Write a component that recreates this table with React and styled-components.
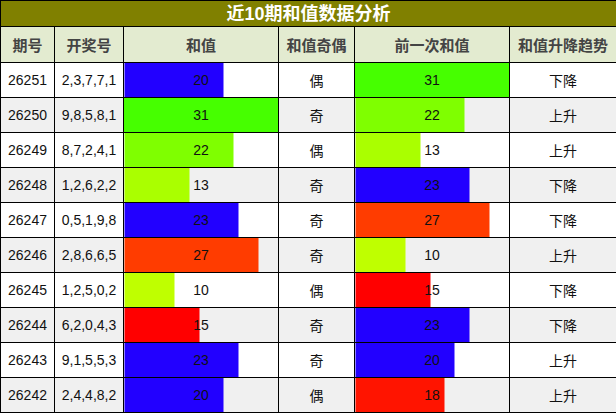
import React from 'react';
import styled, { createGlobalStyle } from 'styled-components';

const GlobalStyle = createGlobalStyle`
  body {
    margin: 0;
    background: #ffffff;
    font-family: "Liberation Sans", "Noto Sans CJK SC", sans-serif;
  }
`;

const rows = [
  { no: '26251', nums: '2,3,7,7,1', sum: 20, parity: '偶', prev: 31, trend: '下降' },
  { no: '26250', nums: '9,8,5,8,1', sum: 31, parity: '奇', prev: 22, trend: '上升' },
  { no: '26249', nums: '8,7,2,4,1', sum: 22, parity: '偶', prev: 13, trend: '上升' },
  { no: '26248', nums: '1,2,6,2,2', sum: 13, parity: '奇', prev: 23, trend: '下降' },
  { no: '26247', nums: '0,5,1,9,8', sum: 23, parity: '奇', prev: 27, trend: '下降' },
  { no: '26246', nums: '2,8,6,6,5', sum: 27, parity: '奇', prev: 10, trend: '上升' },
  { no: '26245', nums: '1,2,5,0,2', sum: 10, parity: '偶', prev: 15, trend: '下降' },
  { no: '26244', nums: '6,2,0,4,3', sum: 15, parity: '奇', prev: 23, trend: '下降' },
  { no: '26243', nums: '9,1,5,5,3', sum: 23, parity: '奇', prev: 20, trend: '上升' },
  { no: '26242', nums: '2,4,4,8,2', sum: 20, parity: '偶', prev: 18, trend: '上升' },
];

const barColors = {
  10: '#bfff00',
  13: '#aaff00',
  15: '#ff0000',
  18: '#ff1400',
  20: '#2200ff',
  22: '#7fff00',
  23: '#2200ff',
  27: '#ff3c00',
  31: '#46ff00',
};

const MAX = 31;

const Table = styled.table`
  width: 616px;
  table-layout: fixed;
  border-collapse: collapse;
  font-size: 14px;
  color: #111;
`;

const Title = styled.th`
  height: 25px;
  padding: 0;
  background: #808000;
  color: #ffffff;
  font-size: 18px;
  font-weight: bold;
  line-height: 20px;
  border: 1px solid #000;
  text-align: center;
  vertical-align: middle;
`;

const Head = styled.th`
  height: 35px;
  padding: 0;
  background: #e3ebd0;
  color: #444;
  font-size: 15px;
  font-weight: bold;
  border: 1px solid #000;
  text-align: center;
`;

const Row = styled.tr`
  background: ${p => (p.$alt ? '#f0f0f0' : '#ffffff')};
`;

const Cell = styled.td`
  height: 34px;
  padding: 0;
  border: 1px solid #000;
  text-align: center;
  vertical-align: middle;
`;

const BarCell = styled(Cell)`
  background: linear-gradient(
    to right,
    ${p => p.$color} ${p => p.$pct}%,
    transparent ${p => p.$pct}%
  );
`;

const Bar = ({ value }) => (
  <BarCell $color={barColors[value]} $pct={((value / MAX) * 100).toFixed(2)}>
    {value}
  </BarCell>
);

export default function App() {
  return (
    <>
      <GlobalStyle />
      <Table>
        <colgroup>
          <col style={{ width: 54 }} />
          <col style={{ width: 69 }} />
          <col style={{ width: 155 }} />
          <col style={{ width: 76 }} />
          <col style={{ width: 155 }} />
          <col style={{ width: 107 }} />
        </colgroup>
        <thead>
          <tr>
            <Title colSpan={6}>近10期和值数据分析</Title>
          </tr>
          <tr>
            <Head>期号</Head>
            <Head>开奖号</Head>
            <Head>和值</Head>
            <Head>和值奇偶</Head>
            <Head>前一次和值</Head>
            <Head>和值升降趋势</Head>
          </tr>
        </thead>
        <tbody>
          {rows.map((r, i) => (
            <Row key={r.no} $alt={i % 2 === 1}>
              <Cell>{r.no}</Cell>
              <Cell>{r.nums}</Cell>
              <Bar value={r.sum} />
              <Cell>{r.parity}</Cell>
              <Bar value={r.prev} />
              <Cell>{r.trend}</Cell>
            </Row>
          ))}
        </tbody>
      </Table>
    </>
  );
}
